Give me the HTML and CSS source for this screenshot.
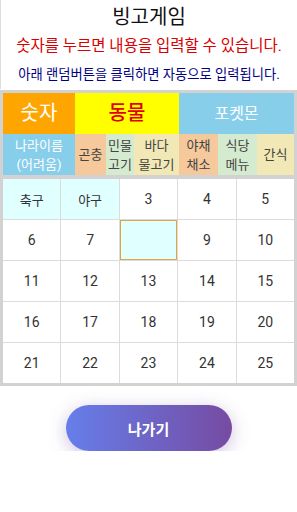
FILE: index.html
```html
<!DOCTYPE html>
<html lang="ko">
<head>
  <meta charset="UTF-8">
  <title>빙고게임</title>
  <meta name="viewport" content="width=device-width, initial-scale=1.0">
  <link rel="stylesheet" href="styles.css">
</head>
<body>
  <div class="intro">
    <h1>빙고게임</h1>
    <p class="notice">숫자를 누르면 내용을 입력할 수 있습니다.</p>
    <p class="hint">아래 랜덤버튼을 클릭하면 자동으로 입력됩니다.</p>
  </div>

  <div class="frame">
    <div class="legend">
      <div class="cell num">숫자</div>
      <div class="cell animal">동물</div>
      <div class="cell poke">포켓몬</div>

      <div class="cell country">나라이름<br>(어려움)</div>
      <div class="cell peach">곤충</div>
      <div class="cell green">민물<br>고기</div>
      <div class="cell sand">바다<br>물고기</div>
      <div class="cell peach">야채<br>채소</div>
      <div class="cell green">식당<br>메뉴</div>
      <div class="cell sand">간식</div>
    </div>

    <div class="board">
      <div class="slot filled">축구</div>
      <div class="slot filled">야구</div>
      <div class="slot">3</div>
      <div class="slot">4</div>
      <div class="slot">5</div>
      <div class="slot">6</div>
      <div class="slot">7</div>
      <div class="slot active"></div>
      <div class="slot">9</div>
      <div class="slot">10</div>
      <div class="slot">11</div>
      <div class="slot">12</div>
      <div class="slot">13</div>
      <div class="slot">14</div>
      <div class="slot">15</div>
      <div class="slot">16</div>
      <div class="slot">17</div>
      <div class="slot">18</div>
      <div class="slot">19</div>
      <div class="slot">20</div>
      <div class="slot">21</div>
      <div class="slot">22</div>
      <div class="slot">23</div>
      <div class="slot">24</div>
      <div class="slot">25</div>
    </div>
  </div>

  <div class="actions">
    <button class="exit">나가기</button>
  </div>
</body>
</html>
```

FILE: styles.css
```css
body {
  margin: 0;
  padding: 0;
  background: #fff;
  font-family: Roboto, "Noto Sans CJK KR", sans-serif;
  color: #222;
}

.intro {
  text-align: center;
  border-left: 1px solid #ddd;
}

h1 {
  margin: 0;
  padding-top: 3px;
  font-size: 20px;
  font-weight: normal;
  line-height: 28px;
  color: #111;
}

.notice {
  margin: 0;
  font-size: 15.5px;
  line-height: 30px;
  color: #d80000;
}

.hint {
  margin: 0;
  font-size: 13.3px;
  line-height: 28px;
  color: #000080;
  white-space: nowrap;
}

.frame {
  margin-top: 1px;
  padding: 3px;
  background: #d2d2d2;
}

.legend {
  display: grid;
  grid-template-columns: 72px 31px 28px 45px 39px 39px 1fr;
  grid-template-rows: 41px 41px;
}

.cell {
  display: flex;
  align-items: center;
  justify-content: center;
  text-align: center;
  font-size: 13px;
  line-height: 19px;
  color: #444;
}

.num {
  background: #ffa500;
  color: #fff;
  font-size: 20px;
}

.animal {
  grid-column: span 3;
  background: #ffff00;
  color: #e00000;
  font-size: 20px;
  font-weight: 500;
}

.poke {
  grid-column: span 3;
  background: #87ceeb;
  color: #fff;
  font-size: 16px;
}

.country {
  background: #87ceeb;
  color: #fff;
}

.peach {
  background: #f5c99b;
}

.green {
  background: #d4ebd0;
}

.sand {
  background: #f2e8b6;
}

.board {
  margin-top: 4px;
  display: grid;
  grid-template-columns: repeat(5, 1fr);
  grid-auto-rows: 40px;
  gap: 1px;
  background: #dcdcdc;
}

.slot {
  display: flex;
  align-items: center;
  justify-content: center;
  background: #fff;
  font-size: 14px;
  color: #333;
}

.slot.filled {
  background: #e0ffff;
  font-size: 13px;
}

.slot.active {
  background: #e0ffff;
  box-shadow: inset 0 0 0 1px #dfa443;
}

.actions {
  display: flex;
  justify-content: center;
  padding-top: 19px;
}

.exit {
  width: 166px;
  height: 46px;
  border: none;
  border-radius: 23px;
  background: linear-gradient(90deg, #667eea, #764ba2);
  color: #fff;
  font-family: "Noto Sans CJK KR", sans-serif;
  font-size: 15px;
  font-weight: bold;
  box-shadow: 0 4px 18px rgba(118, 75, 162, 0.35);
  cursor: pointer;
}
```
